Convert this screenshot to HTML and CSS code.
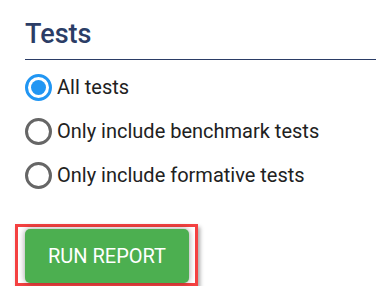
FILE: index.html
```html
<!DOCTYPE html>
<html>
<head>
<meta charset="utf-8">
<link rel="stylesheet" href="styles.css">
</head>
<body>
<div class="panel">
  <h2 class="title">Tests</h2>
  <div class="options">
    <label class="option"><span class="radio checked"><span class="dot"></span></span><span class="label">All tests</span></label>
    <label class="option"><span class="radio"></span><span class="label">Only include benchmark tests</span></label>
    <label class="option"><span class="radio"></span><span class="label">Only include formative tests</span></label>
  </div>
</div>
<div class="actions">
  <div class="highlight">
    <button class="run-btn">RUN REPORT</button>
  </div>
</div>
</body>
</html>
```
FILE: styles.css
```css
html, body {
  margin: 0;
  padding: 0;
  background: #ffffff;
  font-family: Roboto, "Liberation Sans", sans-serif;
}

.panel {
  padding-left: 25px;
}

.title {
  margin: 0;
  padding-top: 18px;
  padding-bottom: 9px;
  font-size: 27px;
  line-height: 32px;
  font-weight: 500;
  color: #2b3d66;
  border-bottom: 1px solid #2b3d66;
}

.options {
  padding-top: 5px;
  display: flex;
  flex-direction: column;
}

.option {
  display: flex;
  align-items: center;
  height: 44px;
  gap: 5px;
}

.radio {
  box-sizing: border-box;
  width: 27px;
  height: 27px;
  border: 3px solid #666666;
  border-radius: 50%;
  display: flex;
  align-items: center;
  justify-content: center;
  flex-shrink: 0;
}

.radio.checked {
  border-color: #2196f3;
}

.dot {
  width: 15px;
  height: 15px;
  border-radius: 50%;
  background: #2196f3;
}

.label {
  font-size: 20px;
  line-height: 24px;
  color: #212121;
}

.actions {
  padding-left: 15px;
  padding-top: 27px;
}

.highlight {
  display: inline-flex;
  border: 3px solid #f44141;
  padding: 2px 6px 0 7px;
  box-shadow: 2px 3px 4px rgba(0, 0, 0, 0.35);
}

.run-btn {
  width: 164px;
  height: 54px;
  border: none;
  border-radius: 5px;
  background: #4caf50;
  color: #ffffff;
  font-family: Roboto, "Liberation Sans", sans-serif;
  font-size: 20px;
  font-weight: 400;
  padding: 0;
  box-shadow: 0 0 6px rgba(0, 0, 0, 0.4);
}
```
